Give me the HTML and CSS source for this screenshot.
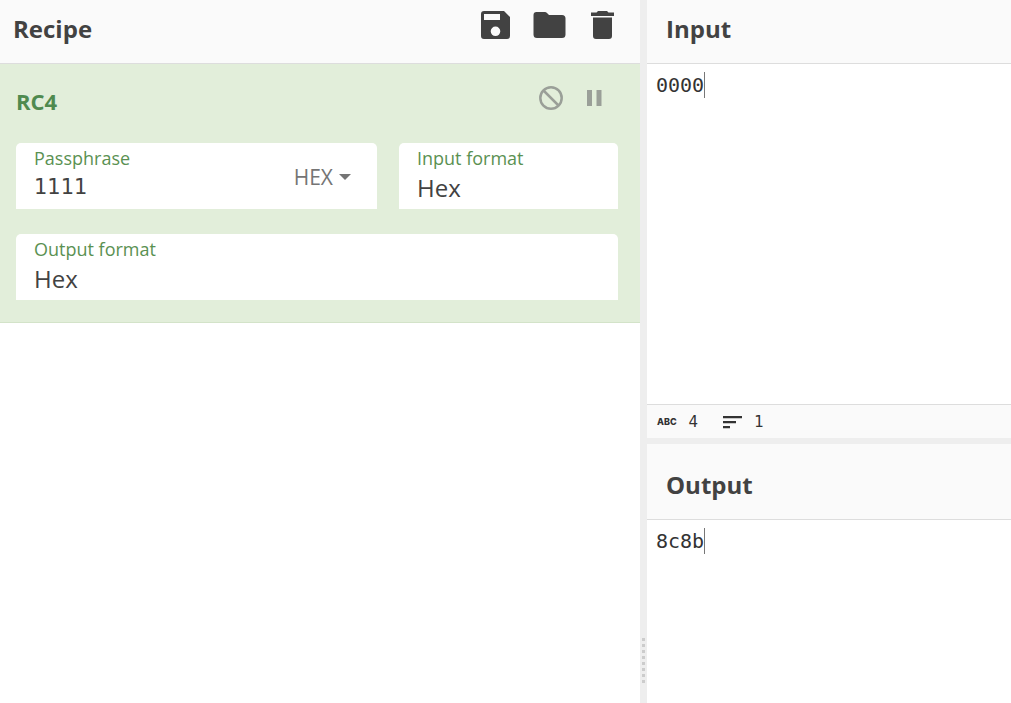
FILE: index.html
```html
<!DOCTYPE html>
<html lang="en">
<head>
<meta charset="utf-8">
<title>Recipe</title>
<link rel="stylesheet" href="styles.css">
</head>
<body>
<main class="workspace">
  <section class="recipe">
    <header class="title-bar">
      <h1 class="title">Recipe</h1>
      <div class="actions">
        <button class="icon-button" type="button" aria-label="Save recipe">
          <svg width="30" height="30" viewBox="0 0 30 30"><path fill-rule="evenodd" d="M4 1H24L30 7V26Q30 29 27 29H4Q1 29 1 26V4Q1 1 4 1ZM4 4V10H20V4ZM15.500 16.500A4.800 4.800 0 1 0 15.500 26.100A4.800 4.800 0 1 0 15.500 16.500Z"/></svg>
        </button>
        <button class="icon-button" type="button" aria-label="Load recipe">
          <svg width="34" height="30" viewBox="0 0 34 30"><path d="M3.500 2H12Q13 2 14 3L16 5H29Q32.500 5 32.500 8.500V24.500Q32.500 28 29 28H4Q.500 28 .500 24.500V5Q.500 2 3.500 2Z"/></svg>
        </button>
        <button class="icon-button" type="button" aria-label="Clear recipe">
          <svg width="24" height="30" viewBox="0 0 24 30"><path d="M1 2.500H6.500L8 1H17L18.500 2.500H24V6H1ZM3 7.500H22V26Q22 29 19 29H6Q3 29 3 26Z"/></svg>
        </button>
      </div>
    </header>
    <article class="operation">
      <header class="operation-head">
        <h2 class="operation-name">RC4</h2>
        <div class="operation-actions">
          <button class="icon-button muted" type="button" aria-label="Disable operation">
            <svg width="26" height="26" viewBox="0 0 26 26"><g fill="none" stroke="currentColor" stroke-width="2.500"><circle cx="13" cy="13" r="10.700"/><path d="M5.500 5.500L20.500 20.500"/></g></svg>
          </button>
          <button class="icon-button muted" type="button" aria-label="Set breakpoint">
            <svg width="20" height="26" viewBox="0 0 20 26"><path d="M3 5H8V21H3ZM12.500 5H17.500V21H12.500Z"/></svg>
          </button>
        </div>
      </header>
      <div class="arguments">
        <div class="field with-toggle">
          <div class="field-main">
            <label class="label" for="passphrase">Passphrase</label>
            <input class="value digits" id="passphrase" type="text" value="1111">
          </div>
          <button class="toggle" type="button">HEX<span class="arrow"></span></button>
        </div>
        <div class="field">
          <label class="label" for="input-format">Input format</label>
          <select class="value" id="input-format"><option>Hex</option></select>
        </div>
        <div class="field wide">
          <label class="label" for="output-format">Output format</label>
          <select class="value" id="output-format"><option>Hex</option></select>
        </div>
      </div>
    </article>
  </section>
  <div class="splitter"><span class="grip"></span></div>
  <div class="io">
    <section class="pane input-pane">
      <header class="title-bar"><h2 class="title" id="input-title">Input</h2></header>
      <div class="editor">
        <textarea class="editor-text" aria-labelledby="input-title" spellcheck="false">0000</textarea>
        <span class="caret"></span>
      </div>
      <footer class="status">
        <span class="abc">ABC</span><span class="count">4</span>
        <svg class="lines" width="20" height="14" viewBox="0 0 20 14"><path d="M1 1H20V3.200H1ZM1 6H14V8.200H1ZM1 11H8V13.200H1Z"/></svg><span class="count">1</span>
      </footer>
    </section>
    <section class="pane output-pane">
      <header class="title-bar tall"><h2 class="title" id="output-title">Output</h2></header>
      <div class="editor">
        <textarea class="editor-text" aria-labelledby="output-title" spellcheck="false" readonly>8c8b</textarea>
        <span class="caret"></span>
      </div>
    </section>
  </div>
</main>
</body>
</html>
```
FILE: styles.css
```css
* { box-sizing: border-box; }
body {
  margin: 0;
  color: #424242;
  font-family: "Open Sans", "Noto Sans", sans-serif;
}
svg { display: block; fill: currentColor; }
.workspace {
  display: grid;
  grid-template-columns: minmax(0, 640fr) 7px minmax(0, 364fr);
  min-height: 100vh;
  background: #fff;
}
.title-bar {
  display: flex;
  align-items: center;
  justify-content: space-between;
  min-height: 64px;
  padding: 0 26px 5px 13px;
  background: #fafafa;
  border-bottom: 1px solid #ddd;
}
.pane .title-bar { padding-left: 19px; }
.pane .tall { min-height: 76px; padding-top: 12px; }
.title {
  margin: 0;
  font-size: 24px;
  line-height: 32px;
  font-weight: 700;
}
.actions { display: flex; gap: 23px; padding-bottom: 8px; }
.icon-button {
  padding: 0;
  border: 0;
  background: none;
  color: #424242;
}
.muted { color: #9a9f98; }
.operation {
  padding: 18px 22px 22px 16px;
  background: #e2eeda;
  border-bottom: 1px solid #d3e3c9;
}
.operation-head {
  display: flex;
  align-items: flex-start;
  justify-content: space-between;
  height: 61px;
}
.operation-name {
  margin: 4px 0 0;
  color: #4f8a4f;
  font-size: 22px;
  line-height: 30px;
  font-weight: 700;
}
.operation-actions { display: flex; gap: 20px; padding: 3px 14px 0 0; }
.arguments {
  display: grid;
  grid-template-columns: 361fr 219fr;
  gap: 25px 22px;
}
.field {
  min-width: 0;
  height: 66px;
  padding: 3px 18px 0;
  background: #fff;
  border-radius: 5px 5px 0 0;
}
.wide { grid-column: 1 / -1; }
.with-toggle { display: flex; padding-right: 26px; }
.field-main { flex: 1; min-width: 0; }
.label {
  display: block;
  color: #5a9152;
  font-size: 18px;
  line-height: 24px;
}
.value {
  display: block;
  width: 100%;
  height: 36px;
  padding: 0;
  border: 0;
  outline: 0;
  appearance: none;
  background: none;
  color: #424242;
  font-family: inherit;
  font-size: 24px;
  line-height: 36px;
}
.digits { height: 34px; font-family: "DejaVu Sans", sans-serif; font-size: 21px; }
.toggle {
  display: flex;
  align-items: center;
  gap: 6px;
  height: 62px;
  padding: 0;
  border: 0;
  background: none;
  color: #757575;
  font-family: inherit;
  font-size: 21px;
  font-weight: 500;
}
.arrow {
  border: 6px solid transparent;
  border-top-color: currentColor;
  border-bottom: 0;
}
.splitter {
  display: flex;
  align-items: flex-end;
  justify-content: center;
  padding-bottom: 17px;
  background: #eee;
}
.grip {
  width: 3px;
  height: 48px;
  background: repeating-linear-gradient(#ccc 0 3px, transparent 3px 6px);
}
.io {
  display: flex;
  flex-direction: column;
  gap: 6px;
  background: #eee;
}
.pane { display: flex; flex-direction: column; background: #fff; }
.input-pane { flex: 438 1 0; }
.output-pane { flex: 259 1 0; }
.editor { position: relative; display: flex; flex: 1; }
.editor, .editor-text {
  font-family: "DejaVu Sans Mono", "Liberation Mono", monospace;
  font-size: 20px;
  line-height: 26px;
}
.editor-text {
  flex: 1;
  min-width: 0;
  padding: 8px 9px;
  border: 0;
  outline: 0;
  resize: none;
  background: none;
  color: #333;
}
.caret {
  position: absolute;
  top: 8px;
  left: calc(9px + 4ch);
  width: 1px;
  height: 26px;
  background: #777;
}
.status {
  display: flex;
  align-items: center;
  height: 34px;
  padding: 0 10px;
  background: #fafafa;
  border-top: 1px solid #ddd;
  color: #333;
}
.abc { font-family: Inter, sans-serif; font-size: 9px; font-weight: 800; }
.count {
  margin-left: 12px;
  font-family: "DejaVu Sans", sans-serif;
  font-size: 15px;
  line-height: 20px;
}
.lines { margin-left: 24px; }
```
